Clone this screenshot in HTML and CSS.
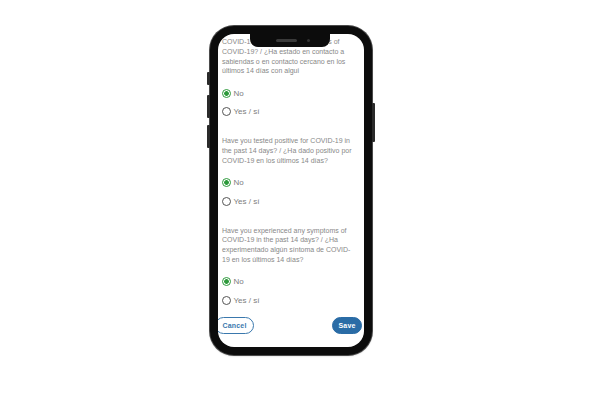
FILE: index.html
```html
<!DOCTYPE html>
<html lang="en">
<head>
<meta charset="utf-8">
<title>COVID-19 screening</title>
<link rel="stylesheet" href="styles.css">
</head>
<body>
<div class="stage">
  <div class="phone">
    <span class="side side-mute"></span>
    <span class="side side-vol-up"></span>
    <span class="side side-vol-down"></span>
    <span class="side side-power"></span>
    <div class="screen">
      <div class="notch"><span class="speaker"></span><span class="cam"></span></div>
      <div class="content">
        <div class="q">
          <p class="q-text">COVID-19 or has shown symptoms of COVID&#8209;19? / ¿Ha estado en contacto a sabiendas o en contacto cercano en los últimos 14 días con algui</p>
          <div class="radios">
            <label class="radio"><span class="dot on"></span>No</label>
            <label class="radio"><span class="dot"></span>Yes / sí</label>
          </div>
        </div>
        <div class="q">
          <p class="q-text">Have you tested positive for COVID-19 in the past 14 days? / ¿Ha dado positivo por COVID-19 en los últimos 14 días?</p>
          <div class="radios">
            <label class="radio"><span class="dot on"></span>No</label>
            <label class="radio"><span class="dot"></span>Yes / sí</label>
          </div>
        </div>
        <div class="q">
          <p class="q-text">Have you experienced any symptoms of COVID-19 in the past 14 days? / ¿Ha experimentado algún síntoma de COVID-19 en los últimos 14 días?</p>
          <div class="radios">
            <label class="radio"><span class="dot on"></span>No</label>
            <label class="radio"><span class="dot"></span>Yes / sí</label>
          </div>
        </div>
        <div class="actions">
          <button class="btn btn-cancel">Cancel</button>
          <button class="btn btn-save">Save</button>
        </div>
      </div>
    </div>
  </div>
</div>
</body>
</html>
```
FILE: styles.css
```css
* { box-sizing: border-box; }
html, body { margin: 0; background: #fff; }
body { font-family: "Liberation Sans", Arial, sans-serif; }

.stage {
  width: 600px;
  height: 400px;
  padding: 26px 0 0 210px;
}

.phone {
  position: relative;
  width: 162px;
  height: 329px;
  border: 8px solid #0c0c0c;
  border-radius: 24px;
  background: #0c0c0c;
  box-shadow: 0 0 0 1px #4a4a4a, 0 1px 2px rgba(0,0,0,0.25);
}

.side {
  position: absolute;
  width: 3px;
  background: #2a2a2a;
  border-radius: 1px;
}
.side-mute { left: -11px; top: 38px; height: 13px; }
.side-vol-up { left: -11px; top: 61px; height: 23px; }
.side-vol-down { left: -11px; top: 91px; height: 23px; }
.side-power { right: -11px; top: 69px; height: 39px; }

.screen {
  position: relative;
  width: 100%;
  height: 100%;
  background: #fff;
  border-radius: 16px;
  overflow: hidden;
}

.notch {
  position: absolute;
  top: 0;
  left: 32px;
  width: 80px;
  height: 13px;
  background: #0c0c0c;
  border-radius: 0 0 8px 8px;
  display: flex;
  align-items: center;
  justify-content: center;
  gap: 10px;
  padding-left: 6px;
  z-index: 2;
}
.speaker {
  width: 21px;
  height: 3px;
  border-radius: 2px;
  background: #3a3a3a;
}
.cam {
  width: 3.5px;
  height: 3.5px;
  border-radius: 50%;
  background: #333;
}

.content {
  padding: 3px 12px 0 4px;
}

.q { margin-bottom: 19.5px; }

.q-text {
  margin: 0;
  font-size: 7px;
  line-height: 9.8px;
  color: #888;
}

.radios {
  margin-top: 12px;
  display: flex;
  flex-direction: column;
  gap: 8.5px;
}

.radio {
  display: flex;
  align-items: center;
  gap: 2.5px;
  height: 10px;
  font-size: 8px;
  color: #7c7c7c;
}

.dot {
  width: 9px;
  height: 9px;
  border-radius: 50%;
  border: 1px solid #555;
  background: #fff;
  flex: none;
}
.dot.on {
  border: 1.2px solid #2e9a3c;
  background: radial-gradient(circle, #2e9a3c 0 2.1px, #fff 2.5px);
}

.actions {
  display: flex;
  justify-content: space-between;
  margin: -7.5px -10px 0 -7px;
}

.btn {
  height: 17px;
  border-radius: 9px;
  font-family: inherit;
  font-size: 7px;
  font-weight: bold;
  padding: 0;
  letter-spacing: 0.2px;
}
.btn-cancel {
  width: 39px;
  background: #fff;
  color: #3a78ad;
  border: 1px solid #3a78ad;
}
.btn-save {
  width: 30px;
  background: #2a6ca6;
  color: #fff;
  border: 1px solid #2a6ca6;
}
```
